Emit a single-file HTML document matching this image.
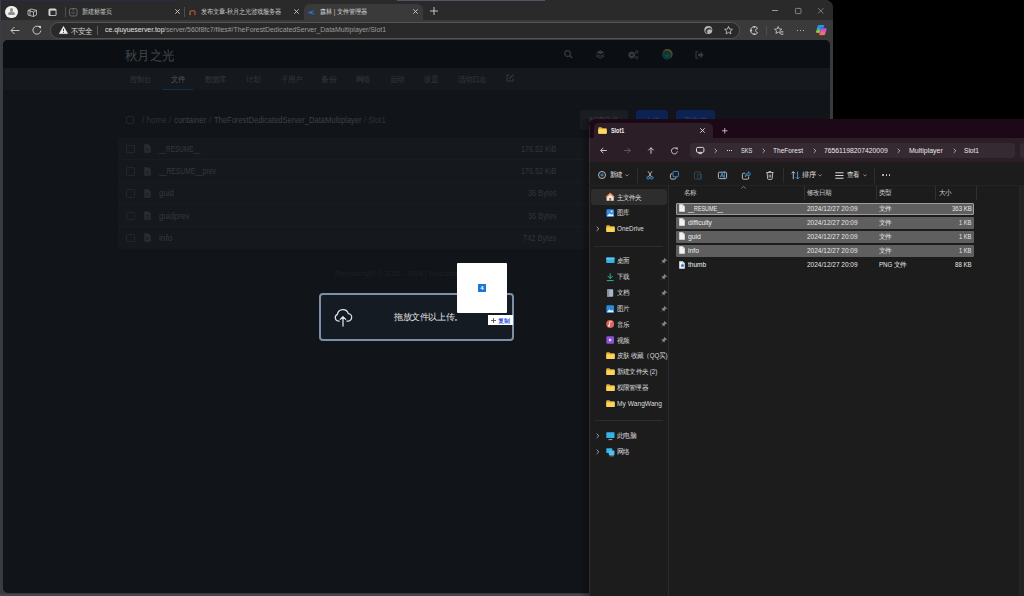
<!DOCTYPE html>
<html><head><meta charset="utf-8"><title>森林 | 文件管理器</title>
<style>
*{margin:0;padding:0;box-sizing:border-box}
html,body{width:1024px;height:596px;overflow:hidden;background:#000;font-family:"Liberation Sans",sans-serif}
.a{position:absolute}
.t{position:absolute;white-space:nowrap;line-height:1;transform-origin:0 0}
.c{display:inline-block;width:1em}
svg{position:absolute;overflow:visible}
</style></head><body>
<div class="a" style="left:0px;top:0px;width:833px;height:596px;background:#3a3a3a;border-top-right-radius:8px"></div>
<div class="a" style="left:0px;top:0px;width:833px;height:20px;background:#2a2a2a;border-top-right-radius:8px"></div>
<div class="a" style="left:0px;top:20px;width:833px;height:20px;background:#3a3a3a;"></div>
<div class="a" style="left:0px;top:0px;width:180px;height:1px;background:#2c2a40;"></div>
<div class="a" style="left:397px;top:0px;width:148px;height:1px;background:#5a5066;"></div>
<div class="a" style="left:0px;top:0px;width:1px;height:596px;background:#3c3a4c;"></div>
<div class="a" style="left:0px;top:594px;width:589px;height:2px;background:#46454e;"></div>
<div class="a" style="left:3px;top:40px;width:827px;height:553px;background:#111418;border-radius:5px"></div>
<div class="a" style="left:5.2px;top:5.7px;width:12.6px;height:12.6px;background:#f0f0f0;border-radius:50%"></div>
<div class="a" style="left:9.9px;top:8.2px;width:3.2px;height:3.4px;background:#8f8f8f;border-radius:50%"></div>
<div class="a" style="left:8.4px;top:12.2px;width:6.2px;height:3.2px;background:#8f8f8f;border-radius:2px 2px 1px 1px"></div>
<svg style="left:26.5px;top:7.5px" width="11" height="9" viewBox="0 0 11 9"><path d="M1 2.5 L4 1 L9.5 2.3 L9.5 6.8 L6.5 8.5 L1 7 Z M1 2.5 L6.5 4 L9.5 2.3 M6.5 4 V8.5 M3 1.7 V7.5" fill="none" stroke="#cfcfcf" stroke-width="0.8"/></svg>
<svg style="left:48px;top:8px" width="9" height="8.5" viewBox="0 0 9 8.5"><rect x="0.5" y="0.5" width="8" height="7.5" rx="1.6" fill="#d6d6d6"/><rect x="2.4" y="2.6" width="5.2" height="4.6" fill="#2a2a2a"/></svg>
<div class="a" style="left:65px;top:7px;width:1px;height:10px;background:#4e4e4e;"></div>
<svg style="left:69px;top:8px" width="9" height="8.5" viewBox="0 0 9 8.5"><rect x="0.5" y="0.5" width="7.5" height="7.5" rx="1.8" fill="none" stroke="#707070" stroke-width="0.9"/><path d="M2.3 5 H6" stroke="#707070" stroke-width="0.8"/><path d="M4.2 0.5 V3" stroke="#707070" stroke-width="0.8"/></svg>
<div class="t" style="left:82px;top:8.58px;font-size:6.8px;color:#c6c6c6;transform:scaleX(0.8828);"><span class="c">新</span><span class="c">建</span><span class="c">标</span><span class="c">签</span><span class="c">页</span></div>
<svg style="left:175px;top:9px" width="5" height="5" viewBox="0 0 5 5"><path d="M0.3 0.3 L4.7 4.7 M4.7 0.3 L0.3 4.7" stroke="#cfcfcf" stroke-width="0.9"/></svg>
<div class="a" style="left:184px;top:7px;width:1px;height:10px;background:#4e4e4e;"></div>
<svg style="left:188.6px;top:9.5px" width="7" height="5" viewBox="0 0 7 5"><path d="M1 5 V2.3 Q1 0.7 3.5 0.7 Q6 0.7 6 2.3 V5" fill="none" stroke="#c04a28" stroke-width="1.3"/><path d="M1 5 V3.5" stroke="#2e9a52" stroke-width="1.3"/></svg>
<div class="t" style="left:201px;top:8.58px;font-size:6.8px;color:#c6c6c6;transform:scaleX(0.8828);"><span class="c">发</span><span class="c">布</span><span class="c">文</span><span class="c">章</span>-<span class="c">秋</span><span class="c">月</span><span class="c">之</span><span class="c">光</span><span class="c">游</span><span class="c">戏</span><span class="c">服</span><span class="c">务</span><span class="c">器</span></div>
<svg style="left:294px;top:9px" width="5" height="5" viewBox="0 0 5 5"><path d="M0.3 0.3 L4.7 4.7 M4.7 0.3 L0.3 4.7" stroke="#cfcfcf" stroke-width="0.9"/></svg>
<div class="a" style="left:303.5px;top:3.5px;width:119.5px;height:17px;background:#3a3a3a;border-radius:6px 6px 0 0"></div>
<svg style="left:307.3px;top:9.5px" width="8" height="5" viewBox="0 0 8 5"><path d="M0.3 3 Q3 0.8 7.8 0.2 Q5.5 1.6 5 2.4 Q6.8 3 7.8 4.8 Q4 3.6 0.3 3 Z" fill="#1e74d6"/></svg>
<div class="t" style="left:320px;top:8.58px;font-size:6.8px;color:#d6d6d6;transform:scaleX(0.8847);"><span class="c">森</span><span class="c">林</span> | <span class="c">文</span><span class="c">件</span><span class="c">管</span><span class="c">理</span><span class="c">器</span></div>
<svg style="left:413px;top:9px" width="5" height="5" viewBox="0 0 5 5"><path d="M0.3 0.3 L4.7 4.7 M4.7 0.3 L0.3 4.7" stroke="#cfcfcf" stroke-width="0.9"/></svg>
<svg style="left:429.8px;top:7.3px" width="8" height="8" viewBox="0 0 8 8"><path d="M4 0 V8 M0 4 H8" stroke="#dcdcdc" stroke-width="0.85"/></svg>
<div class="a" style="left:772.2px;top:10.3px;width:5.6px;height:0.8px;background:#9a9a9a;"></div>
<svg style="left:794.8px;top:8px" width="7" height="6" viewBox="0 0 7 6"><rect x="0.4" y="0.4" width="5.6" height="5.2" rx="0.9" fill="none" stroke="#9a9a9a" stroke-width="0.8"/></svg>
<svg style="left:818.4px;top:8px" width="6" height="6" viewBox="0 0 6 6"><path d="M0.2 0.2 L5.4 5.4 M5.4 0.2 L0.2 5.4" stroke="#9a9a9a" stroke-width="0.75"/></svg>
<svg style="left:9.5px;top:25.5px" width="10" height="9" viewBox="0 0 10 9"><path d="M9.5 4.5 H1 M4.5 1 L1 4.5 L4.5 8" fill="none" stroke="#d8d8d8" stroke-width="0.9"/></svg>
<svg style="left:31.5px;top:25px" width="10" height="10" viewBox="0 0 10 10"><path d="M8.4 3.2 A4 4 0 1 0 8.9 5.6" fill="none" stroke="#d8d8d8" stroke-width="0.9"/><path d="M6.3 0.8 L9 0.9 L8.9 3.7 Z" fill="#d8d8d8"/></svg>
<div class="a" style="left:50px;top:22.2px;width:690px;height:17px;background:#292929;border:1px solid #535353;border-radius:9px"></div>
<svg style="left:58.8px;top:26px" width="9" height="8" viewBox="0 0 9 8"><path d="M4.5 0.4 L8.6 7.6 H0.4 Z" fill="#f0f0f0" stroke="#f0f0f0" stroke-width="0.6" stroke-linejoin="round"/><path d="M4.5 2.8 V5.2" stroke="#2a2a2a" stroke-width="0.9"/><circle cx="4.5" cy="6.4" r="0.5" fill="#2a2a2a"/></svg>
<div class="t" style="left:71px;top:27.50px;font-size:7.5px;color:#d4d4d4;transform:scaleX(0.9333);"><span class="c">不</span><span class="c">安</span><span class="c">全</span></div>
<div class="a" style="left:97px;top:26px;width:1px;height:9px;background:#5a5a5a;"></div>
<div class="t" style="left:104.5px;top:26.82px;font-size:7.1px;color:#e2e2e2;transform:scaleX(0.9670);">ce.qiuyueserver.top</div>
<div class="t" style="left:164px;top:26.82px;font-size:7.1px;color:#9c9c9c;transform:scaleX(0.9741);">/server/560f8fc7/files#/TheForestDedicatedServer_DataMultiplayer/Slot1</div>
<svg style="left:703.6px;top:26px" width="9" height="8" viewBox="0 0 9 8"><circle cx="4.3" cy="4" r="4" fill="#b8b8b8"/><path d="M1.2 5.4 Q2 1.6 5.4 1.8 Q8 2.2 7.6 4.3 Q5.5 2.6 3.8 4 Q2.6 5.2 3.6 7.6 Q1.6 7 1.2 5.4 Z" fill="#3a3a3a"/></svg>
<svg style="left:723.6px;top:26px" width="9" height="8.5" viewBox="0 0 9 8.5"><path d="M4.5 0.5 L5.6 3.1 L8.4 3.3 L6.3 5.1 L6.9 7.9 L4.5 6.4 L2.1 7.9 L2.7 5.1 L0.6 3.3 L3.4 3.1 Z" fill="none" stroke="#cfcfcf" stroke-width="0.8" stroke-linejoin="round"/></svg>
<svg style="left:750px;top:26px" width="9" height="9" viewBox="0 0 9 9"><path d="M7.6 2.2 A3.9 3.9 0 1 0 7.6 6.8 L5.9 5.6 A1.6 1.6 0 0 1 5.9 3.4 Z" fill="none" stroke="#d0d0d0" stroke-width="0.9" stroke-linejoin="round"/><circle cx="1.3" cy="4.5" r="0.9" fill="#d0d0d0"/><circle cx="4.3" cy="0.9" r="0.9" fill="#d0d0d0"/><circle cx="4.3" cy="8.1" r="0.9" fill="#d0d0d0"/></svg>
<div class="a" style="left:766px;top:26px;width:1px;height:9px;background:#4e4e4e;"></div>
<svg style="left:773.9px;top:26px" width="10" height="9" viewBox="0 0 10 9"><path d="M4.2 0.5 L5.3 3 L7.9 3.2 L5.9 4.9 L6.5 7.6 L4.2 6.1 L1.9 7.6 L2.5 4.9 L0.5 3.2 L3.1 3 Z" fill="none" stroke="#d0d0d0" stroke-width="0.8" stroke-linejoin="round"/><path d="M6.8 5.6 H9.4 M7.2 7 H9.4 M6.8 8.4 H9.4" stroke="#d0d0d0" stroke-width="0.7"/></svg>
<div class="a" style="left:796.5px;top:29.5px;width:1.6px;height:1.6px;background:#d8d8d8;border-radius:1px"></div>
<div class="a" style="left:799.5px;top:29.5px;width:1.6px;height:1.6px;background:#d8d8d8;border-radius:1px"></div>
<div class="a" style="left:802.5px;top:29.5px;width:1.6px;height:1.6px;background:#d8d8d8;border-radius:1px"></div>
<svg style="left:815px;top:24px" width="13" height="12" viewBox="0 0 13 12"><defs><linearGradient id="g1" x1="0" y1="0" x2="0" y2="1"><stop offset="0" stop-color="#1a9af5"/><stop offset="0.3" stop-color="#1f8ee8"/><stop offset="0.65" stop-color="#4cc46a"/><stop offset="1" stop-color="#f2d02a"/></linearGradient><linearGradient id="g2" x1="0" y1="0" x2="0" y2="1"><stop offset="0" stop-color="#9b55e6"/><stop offset="0.5" stop-color="#e25ab0"/><stop offset="1" stop-color="#f7904a"/></linearGradient></defs>
<path d="M3.6 0.9 H8.4 Q9.6 0.9 9.2 2.1 L7.2 7.8 Q6.8 8.8 5.8 8.8 H2 Q0.8 8.8 1.1 7.7 L2.6 2 Q2.9 0.9 3.6 0.9 Z" fill="url(#g1)"/>
<path d="M7.2 3.9 H11 Q12.3 3.9 11.9 5.1 L10.3 10.2 Q9.9 11.2 8.9 11.2 H5 Q3.8 11.2 4.2 10 L5.9 4.9 Q6.2 3.9 7.2 3.9 Z" fill="url(#g2)" stroke="#2a1630" stroke-width="0.5" stroke-opacity="0.6"/>
<circle cx="5" cy="10" r="1.1" fill="#f05a2a" opacity="0.8"/></svg>
<div class="a" style="left:3px;top:40px;width:827px;height:28px;background:#0b0e12;border-radius:5px 5px 0 0"></div>
<div class="a" style="left:3px;top:68px;width:827px;height:22px;background:#15181c;"></div>
<div class="t" style="left:125px;top:49.88px;font-size:12.8px;color:#44474b;transform:scaleX(0.9573);"><span class="c">秋</span><span class="c">月</span><span class="c">之</span><span class="c">光</span></div>
<svg style="left:563.5px;top:50.3px" width="9" height="8" viewBox="0 0 9 8"><circle cx="3.6" cy="3.6" r="2.9" fill="none" stroke="#36393e" stroke-width="1.3"/><path d="M5.7 5.7 L8.3 8" stroke="#36393e" stroke-width="1.5"/></svg>
<svg style="left:595.8px;top:50.3px" width="9" height="8" viewBox="0 0 9 8"><path d="M4.25 0.3 L8.3 2.3 L4.25 4.3 L0.2 2.3 Z" fill="#36393e"/><path d="M0.2 4.4 L4.25 6.3 L8.3 4.4 M0.2 6.2 L4.25 8 L8.3 6.2" fill="none" stroke="#36393e" stroke-width="1"/></svg>
<svg style="left:627.5px;top:50px" width="11" height="9" viewBox="0 0 11 9"><circle cx="3.8" cy="5" r="2.4" fill="none" stroke="#36393e" stroke-width="1.6"/><path d="M3.8 1.6 V8.4 M0.4 5 H7.2 M1.4 2.6 L6.2 7.4 M6.2 2.6 L1.4 7.4" stroke="#36393e" stroke-width="1.3"/><circle cx="3.8" cy="5" r="1" fill="#0b0e12"/><circle cx="8.8" cy="2" r="1.3" fill="none" stroke="#36393e" stroke-width="1"/><circle cx="8.8" cy="7.6" r="1.3" fill="none" stroke="#36393e" stroke-width="1"/></svg>
<svg style="left:661.5px;top:49px" width="11" height="11" viewBox="0 0 11 11"><circle cx="5.5" cy="5.2" r="5.1" fill="#57501c"/><circle cx="4.9" cy="6" r="4.5" fill="#0d3838"/><path d="M3.3 6.6 Q4.9 7.8 6.5 6.6" stroke="#2b6b5a" stroke-width="0.7" fill="none"/></svg>
<svg style="left:695px;top:50.5px" width="9" height="8" viewBox="0 0 9 8"><path d="M3.3 0.8 H1 V7.2 H3.3" fill="none" stroke="#36393e" stroke-width="1.1"/><path d="M3 2.8 H5.5 V0.6 L8.6 4 L5.5 7.4 V5.2 H3 Z" fill="#36393e"/></svg>
<div class="t" style="left:130px;top:75.50px;font-size:7.5px;color:#36393d;transform:scaleX(0.9333);"><span class="c">控</span><span class="c">制</span><span class="c">台</span></div>
<div class="t" style="left:171px;top:75.50px;font-size:7.5px;color:#52565b;transform:scaleX(0.9333);"><span class="c">文</span><span class="c">件</span></div>
<div class="t" style="left:205px;top:75.50px;font-size:7.5px;color:#36393d;transform:scaleX(0.9333);"><span class="c">数</span><span class="c">据</span><span class="c">库</span></div>
<div class="t" style="left:246px;top:75.50px;font-size:7.5px;color:#36393d;transform:scaleX(0.9333);"><span class="c">计</span><span class="c">划</span></div>
<div class="t" style="left:281px;top:75.50px;font-size:7.5px;color:#36393d;transform:scaleX(0.9333);"><span class="c">子</span><span class="c">用</span><span class="c">户</span></div>
<div class="t" style="left:321px;top:75.50px;font-size:7.5px;color:#36393d;transform:scaleX(1.0000);"><span class="c">备</span><span class="c">份</span></div>
<div class="t" style="left:355.5px;top:75.50px;font-size:7.5px;color:#36393d;transform:scaleX(0.9533);"><span class="c">网</span><span class="c">络</span></div>
<div class="t" style="left:390px;top:75.50px;font-size:7.5px;color:#36393d;transform:scaleX(0.9333);"><span class="c">启</span><span class="c">动</span></div>
<div class="t" style="left:424px;top:75.50px;font-size:7.5px;color:#36393d;transform:scaleX(0.9333);"><span class="c">设</span><span class="c">置</span></div>
<div class="t" style="left:458px;top:75.50px;font-size:7.5px;color:#36393d;transform:scaleX(0.9500);"><span class="c">活</span><span class="c">动</span><span class="c">日</span><span class="c">志</span></div>
<svg style="left:506px;top:74px" width="8" height="8" viewBox="0 0 8 8"><path d="M3.5 1 H1 V7 H7 V4.5" fill="none" stroke="#36393d" stroke-width="1"/><path d="M3.2 4.8 L7.3 0.7" stroke="#36393d" stroke-width="1.2"/></svg>
<div class="a" style="left:163px;top:88.5px;width:30px;height:1.5px;background:#0b3545;"></div>
<div class="a" style="left:126.2px;top:116.2px;width:7.5px;height:7.5px;background:transparent;border:1px solid #222529;border-radius:1px"></div>
<div class="t" style="left:141.9px;top:115.79px;font-size:8.6px;color:#2f3237;transform:scaleX(0.9368);">/ home /</div>
<div class="t" style="left:173.6px;top:115.79px;font-size:8.6px;color:#3e4146;transform:scaleX(0.9135);">container</div>
<div class="t" style="left:208.6px;top:115.79px;font-size:8.6px;color:#2f3237;transform:scaleX(0.9621);">/</div>
<div class="t" style="left:213.7px;top:115.79px;font-size:8.6px;color:#3e4146;transform:scaleX(0.8804);">TheForestDedicatedServer_DataMultiplayer</div>
<div class="t" style="left:364.2px;top:115.79px;font-size:8.6px;color:#2f3237;transform:scaleX(0.8903);">/ Slot1</div>
<div class="a" style="left:580px;top:110px;width:48px;height:20px;background:#1a1d21;border-radius:3px"></div>
<div class="t" style="left:588.3px;top:117.00px;font-size:7.5px;color:#3a3d42;transform:scaleX(1.0000);"><span class="c">创</span><span class="c">建</span><span class="c">目</span><span class="c">录</span></div>
<div class="a" style="left:636px;top:110px;width:31.5px;height:20px;background:#0c2250;border-radius:3px"></div>
<div class="t" style="left:645.4px;top:117.00px;font-size:7.5px;color:#23457a;transform:scaleX(0.9333);"><span class="c">上</span><span class="c">传</span></div>
<div class="a" style="left:675.7px;top:110px;width:39.5px;height:20px;background:#0c2250;border-radius:3px"></div>
<div class="t" style="left:683.5px;top:117.00px;font-size:7.5px;color:#23457a;transform:scaleX(1.0000);"><span class="c">新</span><span class="c">文</span><span class="c">件</span></div>
<div class="a" style="left:118px;top:137.5px;width:597px;height:111.5px;background:#15181c;"></div>
<div class="a" style="left:118px;top:159.3px;width:597px;height:1px;background:#191c20;"></div>
<div class="a" style="left:118px;top:181.6px;width:597px;height:1px;background:#191c20;"></div>
<div class="a" style="left:118px;top:203.9px;width:597px;height:1px;background:#191c20;"></div>
<div class="a" style="left:118px;top:226.2px;width:597px;height:1px;background:#191c20;"></div>
<div class="a" style="left:126px;top:144.89999999999998px;width:8.5px;height:8.5px;background:transparent;border:1px solid #222529;border-radius:1px"></div>
<svg style="left:144px;top:144.39999999999998px" width="7" height="9" viewBox="0 0 7 9"><path d="M0.3 0.3 H4.3 L6.7 2.7 V8.7 H0.3 Z" fill="#2a2d32"/><path d="M1.8 4.5 H5 M1.8 6.4 H5" stroke="#15181c" stroke-width="0.7"/></svg>
<div class="t" style="left:158.5px;top:144.99px;font-size:8.6px;color:#35383d;transform:scaleX(0.7425);">__RESUME__</div>
<div class="t" style="left:521.0px;top:144.99px;font-size:8.6px;color:#33363b;transform:scaleX(0.8395);">176.52 KiB</div>
<div class="a" style="left:126px;top:167.09999999999997px;width:8.5px;height:8.5px;background:transparent;border:1px solid #222529;border-radius:1px"></div>
<svg style="left:144px;top:166.59999999999997px" width="7" height="9" viewBox="0 0 7 9"><path d="M0.3 0.3 H4.3 L6.7 2.7 V8.7 H0.3 Z" fill="#2a2d32"/><path d="M1.8 4.5 H5 M1.8 6.4 H5" stroke="#15181c" stroke-width="0.7"/></svg>
<div class="t" style="left:158.5px;top:167.19px;font-size:8.6px;color:#35383d;transform:scaleX(0.7823);">__RESUME__prev</div>
<div class="t" style="left:521.0px;top:167.19px;font-size:8.6px;color:#33363b;transform:scaleX(0.8395);">176.52 KiB</div>
<div class="a" style="left:126px;top:189.29999999999998px;width:8.5px;height:8.5px;background:transparent;border:1px solid #222529;border-radius:1px"></div>
<svg style="left:144px;top:188.79999999999998px" width="7" height="9" viewBox="0 0 7 9"><path d="M0.3 0.3 H4.3 L6.7 2.7 V8.7 H0.3 Z" fill="#2a2d32"/><path d="M1.8 4.5 H5 M1.8 6.4 H5" stroke="#15181c" stroke-width="0.7"/></svg>
<div class="t" style="left:158.5px;top:189.39px;font-size:8.6px;color:#35383d;transform:scaleX(0.9231);">guid</div>
<div class="t" style="left:527.5999999999999px;top:189.39px;font-size:8.6px;color:#33363b;transform:scaleX(0.8579);">36 Bytes</div>
<div class="a" style="left:126px;top:211.49999999999997px;width:8.5px;height:8.5px;background:transparent;border:1px solid #222529;border-radius:1px"></div>
<svg style="left:144px;top:210.99999999999997px" width="7" height="9" viewBox="0 0 7 9"><path d="M0.3 0.3 H4.3 L6.7 2.7 V8.7 H0.3 Z" fill="#2a2d32"/><path d="M1.8 4.5 H5 M1.8 6.4 H5" stroke="#15181c" stroke-width="0.7"/></svg>
<div class="t" style="left:158.5px;top:211.59px;font-size:8.6px;color:#35383d;transform:scaleX(0.9251);">guidprev</div>
<div class="t" style="left:527.5999999999999px;top:211.59px;font-size:8.6px;color:#33363b;transform:scaleX(0.8579);">36 Bytes</div>
<div class="a" style="left:126px;top:233.7px;width:8.5px;height:8.5px;background:transparent;border:1px solid #222529;border-radius:1px"></div>
<svg style="left:144px;top:233.2px" width="7" height="9" viewBox="0 0 7 9"><path d="M0.3 0.3 H4.3 L6.7 2.7 V8.7 H0.3 Z" fill="#2a2d32"/><path d="M1.8 4.5 H5 M1.8 6.4 H5" stroke="#15181c" stroke-width="0.7"/></svg>
<div class="t" style="left:158.5px;top:233.79px;font-size:8.6px;color:#35383d;transform:scaleX(0.9596);">info</div>
<div class="t" style="left:523.3px;top:233.79px;font-size:8.6px;color:#33363b;transform:scaleX(0.8635);">742 Bytes</div>
<div class="t" style="left:334.6px;top:269.87px;font-size:7.2px;color:#1f2227;transform:scaleX(0.9891);">Pterodactyl® © 2015 - 2024 | Sinicizated by iceCream</div>
<div class="a" style="left:319px;top:293px;width:195px;height:48px;background:#151b22;border:2px solid #7d8fa7;border-radius:4px"></div>
<svg style="left:334px;top:307px" width="18" height="20" viewBox="0 0 18 20"><path d="M5.2 14 H4.3 A3.5 3.5 0 0 1 3.4 7.3 A5.6 5.6 0 0 1 14.3 6.6 A3.7 3.7 0 0 1 13.6 14 H12.8" fill="none" stroke="#dfe3e8" stroke-width="1.25" stroke-linecap="round"/><path d="M9 19 V9.8 M6.3 12.4 L9 9.6 L11.7 12.4" fill="none" stroke="#dfe3e8" stroke-width="1.25" stroke-linecap="round" stroke-linejoin="round"/></svg>
<div class="t" style="left:394px;top:313.06px;font-size:8.6px;color:#e0e2e4;transform:scaleX(1.0036);"><span class="c">拖</span><span class="c">放</span><span class="c">文</span><span class="c">件</span><span class="c">以</span><span class="c">上</span><span class="c">传</span><span class="c">。</span></div>
<div class="a" style="left:457.3px;top:263.2px;width:50px;height:49.8px;background:#ffffff;border-radius:1px"></div>
<div class="a" style="left:478px;top:284px;width:8.2px;height:8.3px;background:#1976d2;"></div>
<div class="t" style="left:480.3px;top:285.26px;font-size:6px;color:#ffffff;font-weight:bold;">4</div>
<div class="a" style="left:488px;top:315px;width:25px;height:10.3px;background:#ffffff;"></div>
<svg style="left:490.5px;top:317.5px" width="5" height="5" viewBox="0 0 5 5"><path d="M2.5 0 V5 M0 2.5 H5" stroke="#444" stroke-width="0.8"/></svg>
<div class="t" style="left:498px;top:317.80px;font-size:6px;color:#3a5cd8;font-weight:bold;transform:scaleX(1.0000);"><span class="c">复</span><span class="c">制</span></div>
<div class="a" style="left:580px;top:119px;width:10px;height:477px;background:linear-gradient(to right, rgba(0,0,0,0), rgba(0,0,0,0.35));"></div>
<div class="a" style="left:589.3px;top:118.8px;width:434.7px;height:477.2px;background:#1c1c1c;border-top-left-radius:7px;overflow:hidden"></div>
<div class="a" style="left:589.3px;top:118.8px;width:434.7px;height:19.2px;background:#1d0817;border-top-left-radius:7px"></div>
<div class="a" style="left:589.3px;top:138px;width:434.7px;height:23.5px;background:#2b1e27;"></div>
<div class="a" style="left:589.3px;top:126px;width:1px;height:470px;background:rgba(255,255,255,0.09);"></div>
<div class="a" style="left:593.7px;top:122.8px;width:119px;height:15.5px;background:#2b1e27;border-radius:5px 5px 0 0"></div>
<svg style="left:597.8px;top:127px" width="9" height="7" viewBox="0 0 9 7"><path d="M0.3 1 Q0.3 0.2 1.1 0.2 H3.4 L4.3 1.2 H7.9 Q8.7 1.2 8.7 2 V6 Q8.7 6.8 7.9 6.8 H1.1 Q0.3 6.8 0.3 6 Z" fill="#e9b73a"/><path d="M0.3 2.3 H8.7 V6 Q8.7 6.8 7.9 6.8 H1.1 Q0.3 6.8 0.3 6 Z" fill="#fcd968"/></svg>
<div class="t" style="left:610.8px;top:127.57px;font-size:6.6px;color:#f2f2f2;font-weight:bold;transform:scaleX(0.8186);">Slot1</div>
<svg style="left:700px;top:128px" width="5" height="5" viewBox="0 0 5 5"><path d="M0.3 0.3 L4.7 4.7 M4.7 0.3 L0.3 4.7" stroke="#e4e4e4" stroke-width="0.9"/></svg>
<svg style="left:722px;top:128px" width="5.5" height="5.5" viewBox="0 0 5.5 5.5"><path d="M2.75 0 V5.5 M0 2.75 H5.5" stroke="#d8d8d8" stroke-width="0.8"/></svg>
<svg style="left:599.5px;top:147px" width="7" height="7" viewBox="0 0 7 7"><path d="M6.8 3.5 H0.7 M3.3 0.8 L0.7 3.5 L3.3 6.2" fill="none" stroke="#e6e6e6" stroke-width="0.85"/></svg>
<svg style="left:623.7px;top:147px" width="7" height="7" viewBox="0 0 7 7"><path d="M0.2 3.5 H6.3 M3.7 0.8 L6.3 3.5 L3.7 6.2" fill="none" stroke="#6b6068" stroke-width="0.85"/></svg>
<svg style="left:647.6px;top:146.8px" width="6" height="7" viewBox="0 0 6 7"><path d="M3 6.8 V0.8 M0.3 3.4 L3 0.7 L5.7 3.4" fill="none" stroke="#e6e6e6" stroke-width="0.85"/></svg>
<svg style="left:671.3px;top:146.8px" width="7" height="7" viewBox="0 0 7 7"><path d="M6 2.4 A3 3 0 1 0 6.4 4.3" fill="none" stroke="#dcdcdc" stroke-width="0.85"/><path d="M4.5 0.5 L6.7 0.6 L6.5 2.8 Z" fill="#dcdcdc"/></svg>
<div class="a" style="left:689.7px;top:142.7px;width:325.5px;height:15.5px;background:#362a32;border-radius:4px"></div>
<div class="a" style="left:1020px;top:142.7px;width:10px;height:15.5px;background:#362a32;border-radius:4px"></div>
<svg style="left:696px;top:146.7px" width="9" height="7" viewBox="0 0 9 7"><rect x="0.5" y="0.4" width="7.4" height="5" rx="1.3" fill="none" stroke="#e2e2e2" stroke-width="0.95"/><path d="M2.5 6.6 H6" stroke="#e2e2e2" stroke-width="0.9"/></svg>
<svg style="left:713.5px;top:148px" width="4" height="6" viewBox="0 0 4 6"><path d="M0.7 0.7 L2.8 2.8 L0.7 4.9" fill="none" stroke="#cfcfcf" stroke-width="0.8"/></svg>
<div class="a" style="left:726.6px;top:150.3px;width:1px;height:1px;background:#d6d6d6;"></div>
<div class="a" style="left:729px;top:150.3px;width:1px;height:1px;background:#d6d6d6;"></div>
<div class="a" style="left:731.4px;top:150.3px;width:1px;height:1px;background:#d6d6d6;"></div>
<div class="t" style="left:741px;top:147.51px;font-size:6.5px;color:#e8e8e8;transform:scaleX(0.8759);">SKS</div>
<svg style="left:762px;top:148px" width="4" height="6" viewBox="0 0 4 6"><path d="M0.7 0.7 L2.8 2.8 L0.7 4.9" fill="none" stroke="#cfcfcf" stroke-width="0.8"/></svg>
<div class="t" style="left:773px;top:147.51px;font-size:6.5px;color:#e8e8e8;transform:scaleX(1.0127);">TheForest</div>
<svg style="left:813px;top:148px" width="4" height="6" viewBox="0 0 4 6"><path d="M0.7 0.7 L2.8 2.8 L0.7 4.9" fill="none" stroke="#cfcfcf" stroke-width="0.8"/></svg>
<div class="t" style="left:824px;top:147.51px;font-size:6.5px;color:#e8e8e8;transform:scaleX(1.0445);">76561198207420009</div>
<svg style="left:897px;top:148px" width="4" height="6" viewBox="0 0 4 6"><path d="M0.7 0.7 L2.8 2.8 L0.7 4.9" fill="none" stroke="#cfcfcf" stroke-width="0.8"/></svg>
<div class="t" style="left:908.9px;top:147.51px;font-size:6.5px;color:#e8e8e8;transform:scaleX(1.0751);">Multiplayer</div>
<svg style="left:952.5px;top:148px" width="4" height="6" viewBox="0 0 4 6"><path d="M0.7 0.7 L2.8 2.8 L0.7 4.9" fill="none" stroke="#cfcfcf" stroke-width="0.8"/></svg>
<div class="t" style="left:963.7px;top:147.51px;font-size:6.5px;color:#e8e8e8;transform:scaleX(1.0116);">Slot1</div>
<svg style="left:598px;top:170.8px" width="8" height="8" viewBox="0 0 8 8"><circle cx="4" cy="4" r="3.5" fill="none" stroke="#dedede" stroke-width="0.8"/><path d="M4 2.2 V5.8 M2.2 4 H5.8" stroke="#4aa3e8" stroke-width="0.85"/></svg>
<div class="t" style="left:610px;top:172.40px;font-size:6.5px;color:#e4e4e4;transform:scaleX(0.9538);"><span class="c">新</span><span class="c">建</span></div>
<svg style="left:625px;top:173.8px" width="4" height="3" viewBox="0 0 4 3"><path d="M0.4 0.5 L2 2.1 L3.6 0.5" fill="none" stroke="#b8b8b8" stroke-width="0.7"/></svg>
<div class="a" style="left:637px;top:167.5px;width:1px;height:15px;background:#2e2e2e;"></div>
<svg style="left:646.3px;top:170.8px" width="8" height="8.5" viewBox="0 0 8 8.5"><path d="M2 0.2 L5.3 5.6 M6 0.2 L2.7 5.6" stroke="#dcdcdc" stroke-width="0.75"/><circle cx="2.2" cy="6.8" r="1.3" fill="none" stroke="#4aa3e8" stroke-width="0.85"/><circle cx="5.8" cy="6.8" r="1.3" fill="none" stroke="#4aa3e8" stroke-width="0.85"/></svg>
<svg style="left:669.7px;top:171px" width="9" height="8.5" viewBox="0 0 9 8.5"><rect x="3" y="0.4" width="5.4" height="5.4" rx="1.1" fill="none" stroke="#4aa3e8" stroke-width="0.85"/><path d="M2.2 2.5 Q0.4 2.5 0.4 4.2 V6.6 Q0.4 8.1 1.9 8.1 H4.4 Q6 8.1 6 6.4" fill="none" stroke="#dcdcdc" stroke-width="0.8"/></svg>
<svg style="left:694px;top:171px" width="8" height="8.5" viewBox="0 0 8 8.5"><rect x="0.4" y="1" width="6.2" height="7" rx="0.9" fill="none" stroke="#4c4c4c" stroke-width="0.8"/><rect x="3.4" y="3.4" width="4.2" height="4.8" rx="0.5" fill="none" stroke="#1f4e72" stroke-width="0.8"/></svg>
<svg style="left:717.6px;top:171px" width="9" height="8.5" viewBox="0 0 9 8.5"><rect x="0.4" y="1.2" width="8.2" height="6.4" rx="1.1" fill="none" stroke="#dcdcdc" stroke-width="0.8"/><path d="M2.3 6.3 L4 2.2 L5.7 6.3 M2.9 5 H5.1" fill="none" stroke="#4aa3e8" stroke-width="0.8"/><path d="M6.4 0.2 V8.3" stroke="#4aa3e8" stroke-width="0.8"/></svg>
<svg style="left:741.5px;top:170.8px" width="9" height="8.5" viewBox="0 0 9 8.5"><path d="M3.2 2.2 H1.6 Q0.4 2.2 0.4 3.4 V7 Q0.4 8.2 1.6 8.2 H5.5 Q6.7 8.2 6.7 7 V5.6" fill="none" stroke="#dcdcdc" stroke-width="0.8"/><path d="M3.3 5.8 Q3.3 2.3 6.4 2.3 V0.6 L8.6 3 L6.4 5.4 V3.9 Q4.5 3.9 3.3 5.8 Z" fill="none" stroke="#4aa3e8" stroke-width="0.8" stroke-linejoin="round"/></svg>
<svg style="left:766px;top:170.8px" width="8" height="8.8" viewBox="0 0 8 8.8"><path d="M0.2 1.6 H7.6 M2.8 1.6 V0.6 H5 V1.6 M1.1 1.6 L1.6 7.6 Q1.7 8.4 2.5 8.4 H5.3 Q6.1 8.4 6.2 7.6 L6.7 1.6" fill="none" stroke="#dcdcdc" stroke-width="0.8"/><path d="M3.1 3.6 V6.6 M4.7 3.6 V6.6" stroke="#dcdcdc" stroke-width="0.7"/></svg>
<div class="a" style="left:782.5px;top:167.5px;width:1px;height:15px;background:#2e2e2e;"></div>
<svg style="left:790.7px;top:171px" width="9" height="8.5" viewBox="0 0 9 8.5"><path d="M2.3 8.2 V0.6 M0.5 2.4 L2.3 0.6 L4.1 2.4" fill="none" stroke="#dedede" stroke-width="0.8"/><path d="M6.6 0.4 V8 M4.8 6.2 L6.6 8 L8.4 6.2" fill="none" stroke="#4aa3e8" stroke-width="0.9"/></svg>
<div class="t" style="left:802px;top:172.40px;font-size:6.5px;color:#e4e4e4;transform:scaleX(1.0385);"><span class="c">排</span><span class="c">序</span></div>
<svg style="left:818px;top:173.8px" width="4" height="3" viewBox="0 0 4 3"><path d="M0.4 0.5 L2 2.1 L3.6 0.5" fill="none" stroke="#b8b8b8" stroke-width="0.7"/></svg>
<svg style="left:834.7px;top:171.8px" width="9" height="7" viewBox="0 0 9 7"><path d="M0.3 0.8 H8.5 M0.3 3.5 H8.5 M0.3 6.2 H8.5" stroke="#d6d6d6" stroke-width="1.1"/></svg>
<div class="t" style="left:847.3px;top:172.40px;font-size:6.5px;color:#e4e4e4;transform:scaleX(0.9385);"><span class="c">查</span><span class="c">看</span></div>
<svg style="left:862.5px;top:173.8px" width="4" height="3" viewBox="0 0 4 3"><path d="M0.4 0.5 L2 2.1 L3.6 0.5" fill="none" stroke="#b8b8b8" stroke-width="0.7"/></svg>
<div class="a" style="left:874px;top:167.5px;width:1px;height:15px;background:#2e2e2e;"></div>
<div class="a" style="left:882.3px;top:174.4px;width:1.4px;height:1.4px;background:#dedede;border-radius:1px"></div>
<div class="a" style="left:885.5px;top:174.4px;width:1.4px;height:1.4px;background:#dedede;border-radius:1px"></div>
<div class="a" style="left:888.7px;top:174.4px;width:1.4px;height:1.4px;background:#dedede;border-radius:1px"></div>
<div class="a" style="left:589.3px;top:185px;width:434.7px;height:1px;background:#232323;"></div>
<div class="a" style="left:668px;top:186px;width:1px;height:410px;background:#2a2a2a;"></div>
<svg style="left:740.5px;top:185.8px" width="5" height="3" viewBox="0 0 5 3"><path d="M0.4 2.5 L2.5 0.5 L4.6 2.5" fill="none" stroke="#9a9a9a" stroke-width="0.7"/></svg>
<div class="t" style="left:684px;top:190.40px;font-size:6.5px;color:#cdcdcd;transform:scaleX(0.9231);"><span class="c">名</span><span class="c">称</span></div>
<div class="a" style="left:804.4px;top:186px;width:1px;height:14px;background:#303030;"></div>
<div class="t" style="left:807.4px;top:190.40px;font-size:6.5px;color:#cdcdcd;transform:scaleX(0.9308);"><span class="c">修</span><span class="c">改</span><span class="c">日</span><span class="c">期</span></div>
<div class="a" style="left:875.6px;top:186px;width:1px;height:14px;background:#303030;"></div>
<div class="t" style="left:878.7px;top:190.40px;font-size:6.5px;color:#cdcdcd;transform:scaleX(0.9462);"><span class="c">类</span><span class="c">型</span></div>
<div class="a" style="left:935.3px;top:186px;width:1px;height:14px;background:#303030;"></div>
<div class="t" style="left:938.8px;top:190.40px;font-size:6.5px;color:#cdcdcd;transform:scaleX(0.9385);"><span class="c">大</span><span class="c">小</span></div>
<div class="a" style="left:975.7px;top:186px;width:1px;height:14px;background:#303030;"></div>
<div class="a" style="left:1018.6px;top:186px;width:1px;height:410px;background:#272727;"></div>
<div class="a" style="left:1019.6px;top:186px;width:4.4px;height:410px;background:#222222;"></div>
<div class="a" style="left:676px;top:202.5px;width:298px;height:12.3px;background:#5f5f5f;border:1px solid #9c9c9c;border-radius:1px"></div>
<svg style="left:679px;top:204.39999999999998px" width="6" height="8" viewBox="0 0 6 8"><path d="M0.2 0.2 H3.7 L5.8 2.3 V7.8 H0.2 Z" fill="#f2f2f2"/><path d="M3.7 0.2 V2.3 H5.8" fill="none" stroke="#bdbdbd" stroke-width="0.5"/></svg>
<div class="t" style="left:687.9px;top:205.51px;font-size:6.5px;color:#f0f0f0;transform:scaleX(0.8302);">__RESUME__</div>
<div class="t" style="left:807.4px;top:205.51px;font-size:6.5px;color:#e6e6e6;transform:scaleX(0.9998);">2024/12/27 20:09</div>
<div class="t" style="left:878.7px;top:206.10px;font-size:6.5px;color:#e6e6e6;transform:scaleX(0.9462);"><span class="c">文</span><span class="c">件</span></div>
<div class="t" style="left:951.5px;top:205.51px;font-size:6.5px;color:#e6e6e6;transform:scaleX(0.9330);">363 KB</div>
<div class="a" style="left:676px;top:216.53px;width:298px;height:12.3px;background:#5f5f5f;border-radius:1px"></div>
<svg style="left:679px;top:218.42999999999998px" width="6" height="8" viewBox="0 0 6 8"><path d="M0.2 0.2 H3.7 L5.8 2.3 V7.8 H0.2 Z" fill="#f2f2f2"/><path d="M3.7 0.2 V2.3 H5.8" fill="none" stroke="#bdbdbd" stroke-width="0.5"/></svg>
<div class="t" style="left:687.9px;top:219.54px;font-size:6.5px;color:#f0f0f0;transform:scaleX(1.0225);">difficulty</div>
<div class="t" style="left:807.4px;top:219.54px;font-size:6.5px;color:#e6e6e6;transform:scaleX(0.9998);">2024/12/27 20:09</div>
<div class="t" style="left:878.7px;top:220.13px;font-size:6.5px;color:#e6e6e6;transform:scaleX(0.9462);"><span class="c">文</span><span class="c">件</span></div>
<div class="t" style="left:959.0px;top:219.54px;font-size:6.5px;color:#e6e6e6;transform:scaleX(0.8798);">1 KB</div>
<div class="a" style="left:676px;top:230.56px;width:298px;height:12.3px;background:#5f5f5f;border-radius:1px"></div>
<svg style="left:679px;top:232.45999999999998px" width="6" height="8" viewBox="0 0 6 8"><path d="M0.2 0.2 H3.7 L5.8 2.3 V7.8 H0.2 Z" fill="#f2f2f2"/><path d="M3.7 0.2 V2.3 H5.8" fill="none" stroke="#bdbdbd" stroke-width="0.5"/></svg>
<div class="t" style="left:687.9px;top:233.57px;font-size:6.5px;color:#f0f0f0;transform:scaleX(1.0490);">guid</div>
<div class="t" style="left:807.4px;top:233.57px;font-size:6.5px;color:#e6e6e6;transform:scaleX(0.9998);">2024/12/27 20:09</div>
<div class="t" style="left:878.7px;top:234.16px;font-size:6.5px;color:#e6e6e6;transform:scaleX(0.9462);"><span class="c">文</span><span class="c">件</span></div>
<div class="t" style="left:959.0px;top:233.57px;font-size:6.5px;color:#e6e6e6;transform:scaleX(0.8798);">1 KB</div>
<div class="a" style="left:676px;top:244.59px;width:298px;height:12.3px;background:#5f5f5f;border-radius:1px"></div>
<svg style="left:679px;top:246.48999999999998px" width="6" height="8" viewBox="0 0 6 8"><path d="M0.2 0.2 H3.7 L5.8 2.3 V7.8 H0.2 Z" fill="#f2f2f2"/><path d="M3.7 0.2 V2.3 H5.8" fill="none" stroke="#bdbdbd" stroke-width="0.5"/></svg>
<div class="t" style="left:687.9px;top:247.60px;font-size:6.5px;color:#f0f0f0;transform:scaleX(1.0492);">info</div>
<div class="t" style="left:807.4px;top:247.60px;font-size:6.5px;color:#e6e6e6;transform:scaleX(0.9998);">2024/12/27 20:09</div>
<div class="t" style="left:878.7px;top:248.19px;font-size:6.5px;color:#e6e6e6;transform:scaleX(0.9462);"><span class="c">文</span><span class="c">件</span></div>
<div class="t" style="left:959.0px;top:247.60px;font-size:6.5px;color:#e6e6e6;transform:scaleX(0.8798);">1 KB</div>
<svg style="left:679px;top:260.52px" width="6" height="8" viewBox="0 0 6 8"><path d="M0.2 0.2 H3.7 L5.8 2.3 V7.8 H0.2 Z" fill="#f2f2f2"/><path d="M3.7 0.2 V2.3 H5.8" fill="none" stroke="#bdbdbd" stroke-width="0.5"/></svg>
<div class="a" style="left:680.5px;top:264.02px;width:3px;height:3px;background:#2f7fd8;border-radius:50%"></div>
<div class="t" style="left:687.9px;top:261.63px;font-size:6.5px;color:#f0f0f0;transform:scaleX(1.0067);">thumb</div>
<div class="t" style="left:807.4px;top:261.63px;font-size:6.5px;color:#e6e6e6;transform:scaleX(0.9998);">2024/12/27 20:09</div>
<div class="t" style="left:878.7px;top:261.89px;font-size:6.5px;color:#e6e6e6;transform:scaleX(0.9514);">PNG <span class="c">文</span><span class="c">件</span></div>
<div class="t" style="left:954.6999999999999px;top:261.63px;font-size:6.5px;color:#e6e6e6;transform:scaleX(0.9425);">88 KB</div>
<div class="a" style="left:591px;top:189px;width:75.8px;height:16px;background:#2d2d2d;border-radius:3px"></div>
<svg style="left:606px;top:193.2px" width="9" height="8" viewBox="0 0 9 8"><path d="M0.6 4 L4.2 0.6 L7.8 4 V7.8 H0.6 Z" fill="#e8e8e8"/><path d="M0.2 4.2 L4.2 0.4 L8.2 4.2" fill="none" stroke="#f08a4b" stroke-width="1.4" stroke-linejoin="round"/><rect x="3.2" y="5" width="2" height="2.8" fill="#9a6a50"/></svg>
<div class="t" style="left:616.6px;top:194.60px;font-size:6.5px;color:#dcdcdc;transform:scaleX(0.9308);"><span class="c">主</span><span class="c">文</span><span class="c">件</span><span class="c">夹</span></div>
<svg style="left:606px;top:209px" width="9" height="8" viewBox="0 0 9 8"><rect x="0.4" y="0.2" width="7.6" height="7.6" rx="1.3" fill="#2f8be4"/><path d="M0.8 7.2 L3.5 4.2 L5.2 5.8 L6.4 4.7 L7.8 7.2 Z" fill="#e6f0ff"/><circle cx="5.6" cy="2.4" r="0.9" fill="#e6f0ff"/></svg>
<div class="t" style="left:616.6px;top:210.40px;font-size:6.5px;color:#dcdcdc;transform:scaleX(0.9385);"><span class="c">图</span><span class="c">库</span></div>
<svg style="left:606px;top:225px" width="9" height="8" viewBox="0 0 9 8"><path d="M0.3 1 Q0.3 0.2 1.1 0.2 H3.4 L4.3 1.2 H7.9 Q8.7 1.2 8.7 2 V6.2 Q8.7 7 7.9 7 H1.1 Q0.3 7 0.3 6.2 Z" fill="#e3ad2e"/><path d="M0.3 2.3 H8.7 V6.2 Q8.7 7 7.9 7 H1.1 Q0.3 7 0.3 6.2 Z" fill="#fad55e"/></svg>
<div class="t" style="left:616.6px;top:225.81px;font-size:6.5px;color:#dcdcdc;transform:scaleX(0.9793);">OneDrive</div>
<svg style="left:596px;top:226px" width="4" height="6" viewBox="0 0 4 6"><path d="M0.7 0.7 L2.8 2.8 L0.7 4.9" fill="none" stroke="#c8c8c8" stroke-width="0.8"/></svg>
<svg style="left:606px;top:256.8px" width="9" height="8" viewBox="0 0 9 8"><rect x="0.3" y="0.6" width="8.2" height="5.4" rx="0.6" fill="#35b2e6"/><rect x="0.3" y="0.6" width="8.2" height="2" fill="#5cc6f0"/></svg>
<div class="t" style="left:616.6px;top:258.20px;font-size:6.5px;color:#dcdcdc;transform:scaleX(0.9385);"><span class="c">桌</span><span class="c">面</span></div>
<svg style="left:660.5px;top:257.8px" width="6" height="6" viewBox="0 0 6 6"><path d="M3.6 0.3 L5.7 2.4 L4.6 2.8 L3.4 4 L3.3 5.2 L0.8 2.7 L2 2.6 L3.2 1.4 Z M1.7 4.3 L0.3 5.7" fill="#8a8a8a" stroke="#8a8a8a" stroke-width="0.5"/></svg>
<svg style="left:606px;top:272.7px" width="9" height="8" viewBox="0 0 9 8"><path d="M4.2 0.3 V5.4 M1.7 3 L4.2 5.5 L6.7 3" fill="none" stroke="#2db88f" stroke-width="1"/><path d="M0.8 7.6 H7.6" stroke="#2db88f" stroke-width="1"/></svg>
<div class="t" style="left:616.6px;top:274.10px;font-size:6.5px;color:#dcdcdc;transform:scaleX(0.9385);"><span class="c">下</span><span class="c">载</span></div>
<svg style="left:660.5px;top:273.7px" width="6" height="6" viewBox="0 0 6 6"><path d="M3.6 0.3 L5.7 2.4 L4.6 2.8 L3.4 4 L3.3 5.2 L0.8 2.7 L2 2.6 L3.2 1.4 Z M1.7 4.3 L0.3 5.7" fill="#8a8a8a" stroke="#8a8a8a" stroke-width="0.5"/></svg>
<svg style="left:606px;top:288.8px" width="9" height="8" viewBox="0 0 9 8"><rect x="1.2" y="0.2" width="6" height="7.6" rx="0.8" fill="#a9b6c6"/><rect x="1.2" y="0.2" width="2" height="7.6" fill="#8291a5"/></svg>
<div class="t" style="left:616.6px;top:290.20px;font-size:6.5px;color:#dcdcdc;transform:scaleX(0.9385);"><span class="c">文</span><span class="c">档</span></div>
<svg style="left:660.5px;top:289.8px" width="6" height="6" viewBox="0 0 6 6"><path d="M3.6 0.3 L5.7 2.4 L4.6 2.8 L3.4 4 L3.3 5.2 L0.8 2.7 L2 2.6 L3.2 1.4 Z M1.7 4.3 L0.3 5.7" fill="#8a8a8a" stroke="#8a8a8a" stroke-width="0.5"/></svg>
<svg style="left:606px;top:304.6px" width="9" height="8" viewBox="0 0 9 8"><rect x="0.4" y="0.2" width="7.6" height="7.6" rx="1" fill="#2b8ae0"/><path d="M0.8 7.2 L3.5 4.2 L5.2 5.8 L6.4 4.7 L7.8 7.2 Z" fill="#e6f0ff"/></svg>
<div class="t" style="left:616.6px;top:306.00px;font-size:6.5px;color:#dcdcdc;transform:scaleX(0.9385);"><span class="c">图</span><span class="c">片</span></div>
<svg style="left:660.5px;top:305.6px" width="6" height="6" viewBox="0 0 6 6"><path d="M3.6 0.3 L5.7 2.4 L4.6 2.8 L3.4 4 L3.3 5.2 L0.8 2.7 L2 2.6 L3.2 1.4 Z M1.7 4.3 L0.3 5.7" fill="#8a8a8a" stroke="#8a8a8a" stroke-width="0.5"/></svg>
<svg style="left:606px;top:320.4px" width="9" height="8" viewBox="0 0 9 8"><circle cx="4.2" cy="4" r="3.9" fill="#e0655e"/><path d="M3.6 5.6 V2 L5.6 1.6" stroke="#fff" stroke-width="0.8" fill="none"/><circle cx="3" cy="5.7" r="0.9" fill="#fff"/></svg>
<div class="t" style="left:616.6px;top:321.80px;font-size:6.5px;color:#dcdcdc;transform:scaleX(0.9385);"><span class="c">音</span><span class="c">乐</span></div>
<svg style="left:660.5px;top:321.4px" width="6" height="6" viewBox="0 0 6 6"><path d="M3.6 0.3 L5.7 2.4 L4.6 2.8 L3.4 4 L3.3 5.2 L0.8 2.7 L2 2.6 L3.2 1.4 Z M1.7 4.3 L0.3 5.7" fill="#8a8a8a" stroke="#8a8a8a" stroke-width="0.5"/></svg>
<svg style="left:606px;top:336.2px" width="9" height="8" viewBox="0 0 9 8"><rect x="0.4" y="0.2" width="7.6" height="7.6" rx="1" fill="#8c52d8"/><path d="M3.2 2.4 L5.8 4 L3.2 5.6 Z" fill="#fff"/></svg>
<div class="t" style="left:616.6px;top:337.60px;font-size:6.5px;color:#dcdcdc;transform:scaleX(0.9385);"><span class="c">视</span><span class="c">频</span></div>
<svg style="left:660.5px;top:337.2px" width="6" height="6" viewBox="0 0 6 6"><path d="M3.6 0.3 L5.7 2.4 L4.6 2.8 L3.4 4 L3.3 5.2 L0.8 2.7 L2 2.6 L3.2 1.4 Z M1.7 4.3 L0.3 5.7" fill="#8a8a8a" stroke="#8a8a8a" stroke-width="0.5"/></svg>
<svg style="left:606px;top:352.1px" width="9" height="8" viewBox="0 0 9 8"><path d="M0.3 1 Q0.3 0.2 1.1 0.2 H3.4 L4.3 1.2 H7.9 Q8.7 1.2 8.7 2 V6.2 Q8.7 7 7.9 7 H1.1 Q0.3 7 0.3 6.2 Z" fill="#e3ad2e"/><path d="M0.3 2.3 H8.7 V6.2 Q8.7 7 7.9 7 H1.1 Q0.3 7 0.3 6.2 Z" fill="#fad55e"/></svg>
<div class="t" style="left:616.6px;top:353.18px;font-size:6.5px;color:#dcdcdc;transform:scaleX(0.9509);"><span class="c">皮</span><span class="c">肤</span> <span class="c">收</span><span class="c">藏</span><span class="c">（</span>QQ<span class="c">买</span>)</div>
<svg style="left:606px;top:368px" width="9" height="8" viewBox="0 0 9 8"><path d="M0.3 1 Q0.3 0.2 1.1 0.2 H3.4 L4.3 1.2 H7.9 Q8.7 1.2 8.7 2 V6.2 Q8.7 7 7.9 7 H1.1 Q0.3 7 0.3 6.2 Z" fill="#e3ad2e"/><path d="M0.3 2.3 H8.7 V6.2 Q8.7 7 7.9 7 H1.1 Q0.3 7 0.3 6.2 Z" fill="#fad55e"/></svg>
<div class="t" style="left:616.6px;top:369.07px;font-size:6.5px;color:#dcdcdc;transform:scaleX(0.9538);"><span class="c">新</span><span class="c">建</span><span class="c">文</span><span class="c">件</span><span class="c">夹</span> (2)</div>
<svg style="left:606px;top:384px" width="9" height="8" viewBox="0 0 9 8"><path d="M0.3 1 Q0.3 0.2 1.1 0.2 H3.4 L4.3 1.2 H7.9 Q8.7 1.2 8.7 2 V6.2 Q8.7 7 7.9 7 H1.1 Q0.3 7 0.3 6.2 Z" fill="#e3ad2e"/><path d="M0.3 2.3 H8.7 V6.2 Q8.7 7 7.9 7 H1.1 Q0.3 7 0.3 6.2 Z" fill="#fad55e"/></svg>
<div class="t" style="left:616.6px;top:385.40px;font-size:6.5px;color:#dcdcdc;transform:scaleX(0.9477);"><span class="c">权</span><span class="c">限</span><span class="c">管</span><span class="c">理</span><span class="c">器</span></div>
<svg style="left:606px;top:400px" width="9" height="8" viewBox="0 0 9 8"><path d="M0.3 1 Q0.3 0.2 1.1 0.2 H3.4 L4.3 1.2 H7.9 Q8.7 1.2 8.7 2 V6.2 Q8.7 7 7.9 7 H1.1 Q0.3 7 0.3 6.2 Z" fill="#e3ad2e"/><path d="M0.3 2.3 H8.7 V6.2 Q8.7 7 7.9 7 H1.1 Q0.3 7 0.3 6.2 Z" fill="#fad55e"/></svg>
<div class="t" style="left:616.6px;top:400.81px;font-size:6.5px;color:#dcdcdc;transform:scaleX(1.0238);">My WangWang</div>
<svg style="left:606px;top:432px" width="9" height="8" viewBox="0 0 9 8"><rect x="0.3" y="0.3" width="8.2" height="5.6" rx="0.6" fill="#35b2e6"/><path d="M2.5 7.6 H6.3" stroke="#9aa" stroke-width="1"/></svg>
<div class="t" style="left:616.6px;top:433.40px;font-size:6.5px;color:#dcdcdc;transform:scaleX(0.9846);"><span class="c">此</span><span class="c">电</span><span class="c">脑</span></div>
<svg style="left:596px;top:433px" width="4" height="6" viewBox="0 0 4 6"><path d="M0.7 0.7 L2.8 2.8 L0.7 4.9" fill="none" stroke="#c8c8c8" stroke-width="0.8"/></svg>
<svg style="left:606px;top:448px" width="9" height="8" viewBox="0 0 9 8"><rect x="0.3" y="0.3" width="6" height="4.8" rx="0.6" fill="#35b2e6"/><rect x="2.8" y="2.6" width="5.6" height="4.4" rx="0.6" fill="#4cc3ef"/><path d="M3.5 7.8 H8" stroke="#9aa" stroke-width="0.9"/></svg>
<div class="t" style="left:616.6px;top:449.40px;font-size:6.5px;color:#dcdcdc;transform:scaleX(0.9615);"><span class="c">网</span><span class="c">络</span></div>
<svg style="left:596px;top:449px" width="4" height="6" viewBox="0 0 4 6"><path d="M0.7 0.7 L2.8 2.8 L0.7 4.9" fill="none" stroke="#c8c8c8" stroke-width="0.8"/></svg>
<div class="a" style="left:594px;top:245.5px;width:69px;height:1px;background:#2c2c2c;"></div>
<div class="a" style="left:595px;top:420px;width:68px;height:1px;background:#2c2c2c;"></div>
</body></html>
